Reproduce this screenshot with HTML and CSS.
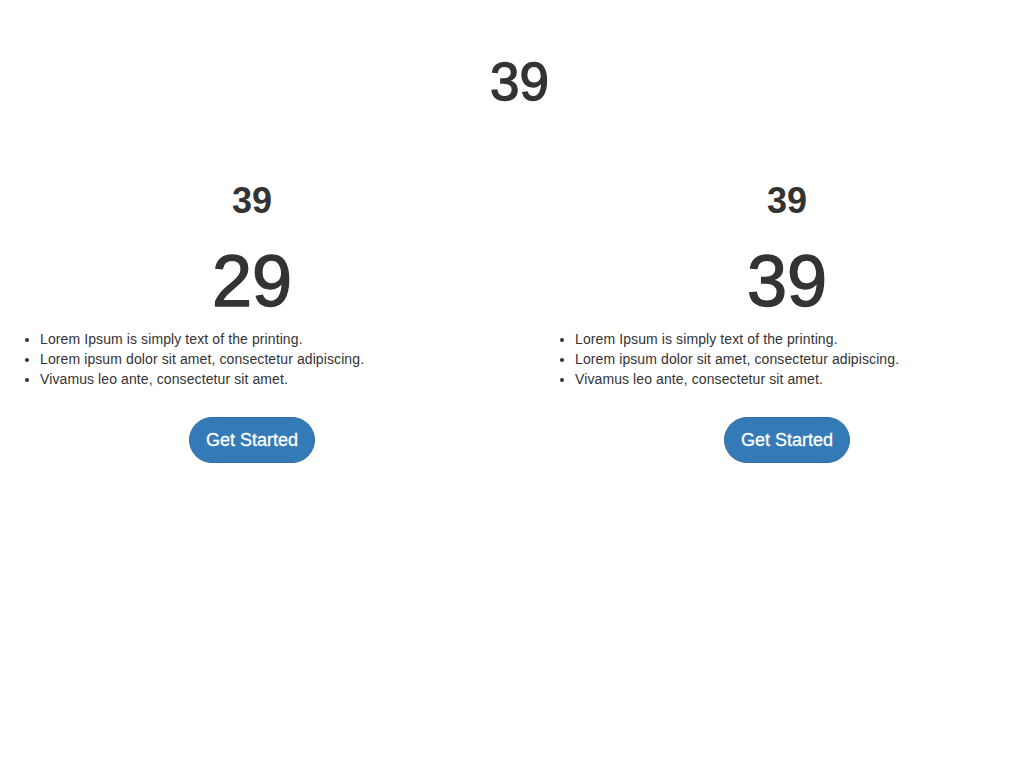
FILE: index.html
```html
<!DOCTYPE html>
<html>
<head>
<meta charset="utf-8">
<link rel="stylesheet" href="styles.css">
</head>
<body>
<div class="page">
  <h1 class="title">39</h1>
  <div class="row">
    <div class="col">
      <h2 class="label">39</h2>
      <div class="price">29</div>
      <ul class="features">
        <li>Lorem Ipsum is simply text of the printing.</li>
        <li>Lorem ipsum dolor sit amet, consectetur adipiscing.</li>
        <li>Vivamus leo ante, consectetur sit amet.</li>
      </ul>
      <div class="action"><a class="btn">Get Started</a></div>
    </div>
    <div class="col">
      <h2 class="label">39</h2>
      <div class="price">39</div>
      <ul class="features">
        <li>Lorem Ipsum is simply text of the printing.</li>
        <li>Lorem ipsum dolor sit amet, consectetur adipiscing.</li>
        <li>Vivamus leo ante, consectetur sit amet.</li>
      </ul>
      <div class="action"><a class="btn">Get Started</a></div>
    </div>
  </div>
</div>
</body>
</html>
```
FILE: styles.css
```css
html, body {
  margin: 0;
  padding: 0;
  overflow: hidden;
  background: #fff;
}
body {
  font-family: "Liberation Sans", Arial, sans-serif;
  font-size: 14px;
  line-height: 20px;
  color: #333;
}
.page {
  width: 1039px;
  padding-top: 53px;
}
.title {
  margin: 0;
  font-size: 53px;
  line-height: 1.1;
  font-weight: 400;
  -webkit-text-stroke: 1.3px #333;
  text-align: center;
}
.row {
  display: flex;
  gap: 31px;
  margin-top: 70px;
}
.col {
  width: 504px;
}
.label {
  margin: 0;
  font-size: 36px;
  line-height: 1.1;
  font-weight: 700;
  text-align: center;
}
.price {
  margin-top: 21px;
  font-size: 72px;
  line-height: 1.1;
  -webkit-text-stroke: 1.4px #333;
  text-align: center;
}
.features {
  margin: 8px 0 0;
  padding-left: 40px;
  letter-spacing: 0.1px;
}
.action {
  margin-top: 28px;
  text-align: center;
}
.btn {
  display: inline-block;
  box-sizing: border-box;
  height: 46px;
  padding: 0 16px;
  line-height: 44px;
  font-size: 18px;
  color: #fff;
  background: #337ab7;
  border: 1px solid #2e6da4;
  border-radius: 23px;
  -webkit-text-stroke: 0.3px #fff;
}
```
